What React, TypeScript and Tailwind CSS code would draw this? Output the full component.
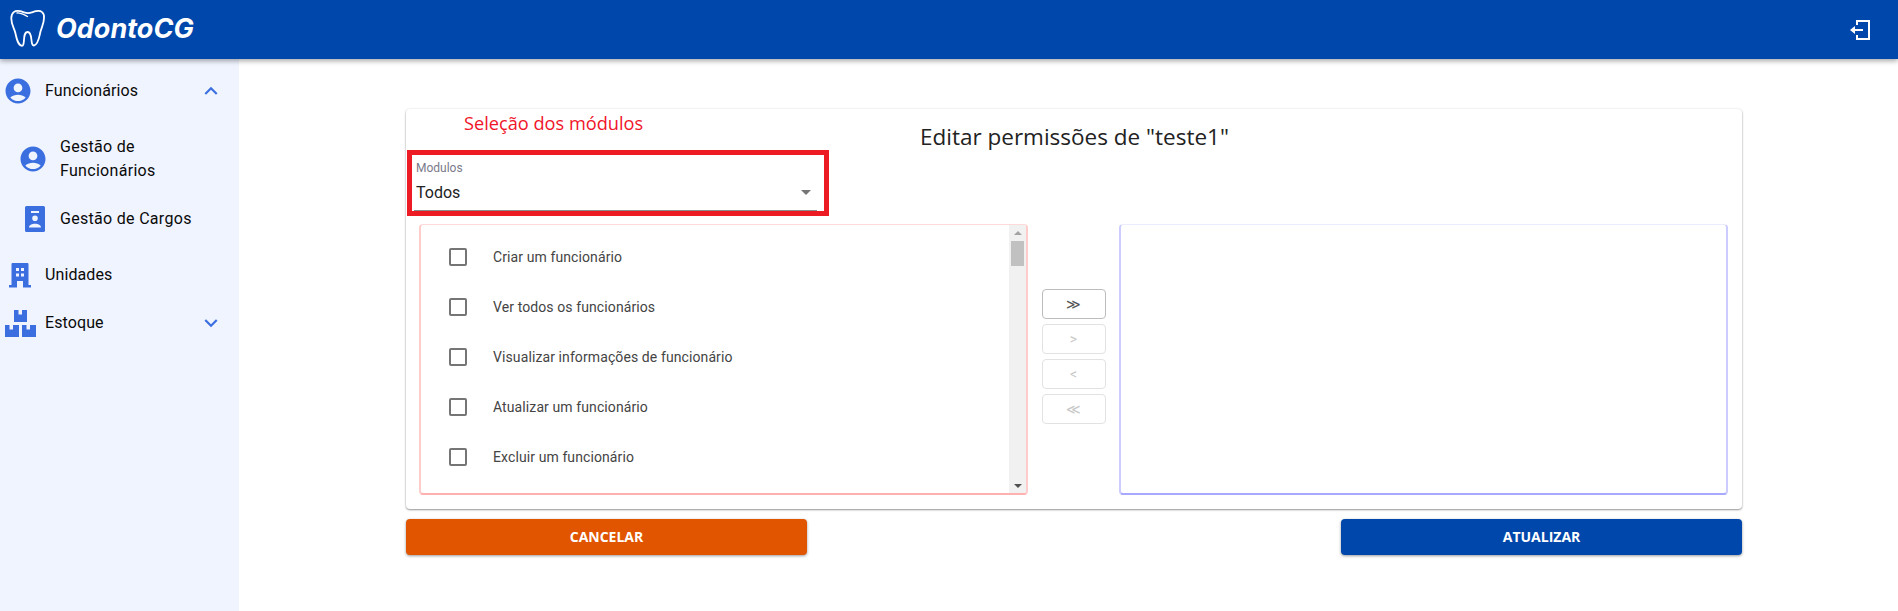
import React from "react";

const Blue = "#3b6fe0";
const AccountIcon = ({ s = 30 }: { s?: number }) => (
  <svg width={s} height={s} viewBox="0 0 24 24" fill={Blue}><path d="M12 2C6.48 2 2 6.48 2 12s4.48 10 10 10 10-4.48 10-10S17.52 2 12 2zm0 4c1.93 0 3.5 1.57 3.5 3.5S13.93 13 12 13s-3.5-1.57-3.5-3.5S10.07 6 12 6zm0 14c-2.03 0-4.43-.82-6.14-2.88C7.55 15.8 9.68 15 12 15s4.45.8 6.14 2.12C16.43 19.18 14.03 20 12 20z" /></svg>
);
const BadgeIcon = () => (
  <svg width="20" height="26" viewBox="0 0 20 26" fill={Blue}>
    <path fillRule="evenodd" d="M1.500 0h17A1.500 1.500 0 0 1 20 1.500v23a1.500 1.500 0 0 1-1.500 1.500h-17A1.500 1.500 0 0 1 0 24.500v-23A1.500 1.500 0 0 1 1.500 0zM6 5v2h8V5H6zm4 4.500a2.800 2.800 0 1 0 0 5.600 2.800 2.800 0 0 0 0-5.600zM4 21.500h12c0-2.600-3-3.800-6-3.800s-6 1.200-6 3.800z" />
  </svg>
);
const BuildingIcon = () => (
  <svg width="22" height="25" viewBox="0 0 22 25" fill={Blue}>
    <path fillRule="evenodd" d="M3.500 0h15a1 1 0 0 1 1 1v21H22v2.500h-8V18H8v6.500H0V22h2.500V1a1 1 0 0 1 1-1zM7 5v3h3V5H7zm5 0v3h3V5h-3zM7 10.500v3h3v-3H7zm5 0v3h3v-3h-3z" />
  </svg>
);
const BoxesIcon = () => (
  <svg width="31" height="27" viewBox="0 0 31 27" fill={Blue}>
    <path fillRule="evenodd" d="M9 0h4.500v4.500h3.500V0H22v12H9V0zM0 15h4.500v4.500H8V15h6v12H0V15zm17 0h4.500v4.500H25V15h6v12H17V15z" />
  </svg>
);
const Chevron = ({ up }: { up?: boolean }) => (
  <svg width="26" height="26" viewBox="0 0 24 24" fill={Blue}>
    <path d={up ? "M7.41 15.41 12 10.83l4.59 4.58L18 14l-6-6-6 6z" : "M7.41 8.59 12 13.17l4.59-4.58L18 10l-6 6-6-6z"} />
  </svg>
);
const Tooth = () => (
  <svg width="36" height="38" viewBox="0 0 36 38" fill="none" stroke="#fff" strokeWidth="2" strokeLinejoin="round" strokeLinecap="round">
    <path d="M10 2.200C5 1 1.300 3.500 1.300 9.500c0 5.500 2.500 9 3.800 13.500 1.300 5 2.200 13 6.900 13.800 1.500.2 1.800-3 2-6 .3-4 .4-7.500 3.500-7.800 3-.2 3.500 3.500 3.900 7.500.3 3 .7 6.300 2.500 6 4.500-.8 5.400-9 6.600-14 1.200-4.500 3.500-8 3.500-13.500C34.500 3.500 31 1 26 2.200c-3 .7-5.500 2-8 2-2.500 0-5-1.300-8-2z" strokeWidth="1.800" />
    <path d="M7 4c3.500-.4 6.500 1.500 10.500 3.500" strokeWidth="1.300" />
  </svg>
);

const NavRow = ({ icon, label, chev, className, track, iconPad }: { icon: React.ReactNode; label: string; chev?: React.ReactNode; className: string; track?: string; iconPad?: string }) => (
  <div className={`flex items-center ${className}`}>
    <div className={`w-[45px] shrink-0 flex justify-center ${iconPad ?? "pr-[5px]"}`}>{icon}</div>
    <span className={`flex-1 text-[16px] leading-[24px] text-[#0a0a0a] ${track ?? "tracking-[0.1px]"}`}>{label}</span>
    {chev && <div className="mr-[15px] flex">{chev}</div>}
  </div>
);

const perms = [
  "Criar um funcionário",
  "Ver todos os funcionários",
  "Visualizar informações de funcionário",
  "Atualizar um funcionário",
  "Excluir um funcionário",
];

const MoveBtn = ({ t, active }: { t: string; active?: boolean }) => (
  <div className={`h-[30px] w-[64px] flex items-center justify-center rounded-[4px] border text-[14px] leading-none ${active ? "border-[#bdbdbd] text-[#555]" : "border-[#e2e2e2] text-[#c8c8c8]"}`}>{t}</div>
);

export default function App() {
  return (
    <div className="w-full h-[611px] overflow-hidden flex flex-col bg-white" style={{ fontFamily: "Roboto, sans-serif" }}>
      <header className="relative z-10 h-[59px] shrink-0 bg-[#0047ab] flex items-center justify-between pl-[10px] pr-[27px] shadow-[0_2px_5px_rgba(0,0,0,0.35)]">
        <div className="flex items-center gap-[10px] mt-[-3px]">
          <Tooth />
          <span className="text-white italic font-bold text-[27px] leading-none" style={{ fontFamily: "Inter, sans-serif" }}>OdontoCG</span>
        </div>
        <svg width="22" height="22" viewBox="0 0 22 22" fill="none" stroke="#fff" strokeWidth="2">
          <path d="M8 6V2h12v18H8v-4" />
          <path d="M14 11H5" />
          <path d="M6 7 1 11l5 4z" fill="#fff" stroke="none" />
        </svg>
      </header>
      <div className="flex-1 flex min-h-0">
        <aside className="w-[239px] shrink-0 bg-[#f0f4ff] pt-[14px]">
          <NavRow className="h-[36px]" iconPad="pr-[10px]" icon={<AccountIcon />} label="Funcionários" chev={<Chevron up />} />
          <div className="pl-[15px] mt-[20px] pr-[40px]">
            <NavRow className="h-[60px]" iconPad="pr-[10px]" icon={<AccountIcon />} label="Gestão de Funcionários" track="tracking-[0.3px]" />
            <NavRow className="h-[60px]" icon={<BadgeIcon />} label="Gestão de Cargos" track="tracking-[0.3px]" />
          </div>
          <NavRow className="h-[48px] mt-[2px]" icon={<BuildingIcon />} label="Unidades" />
          <NavRow className="h-[48px]" icon={<BoxesIcon />} label="Estoque" chev={<Chevron />} />
        </aside>
        <main className="flex-1 pl-[167px] pr-[156px] pt-[50px]">
          <section className="h-[400px] rounded-[4px] bg-white shadow-[0_1px_2px_rgba(0,0,0,0.4),0_0_3px_rgba(0,0,0,0.08)]">
            <div className="flex h-[115px]">
              <div className="w-[423px] pl-[1px] shrink-0">
                <div className="h-[41px] pl-[57px] pt-[2px] text-[18.2px] leading-[24px] text-[#f0142a]" style={{ fontFamily: "'Open Sans', sans-serif" }}>Seleção dos módulos</div>
                <div className="h-[66px] border-[5px] border-[#ed1c24] pl-[2px] pr-[7px]">
                  <div className="h-[56px] border-b border-[#8a8a8a] flex flex-col pl-[2px]">
                    <div className="text-[12px] leading-[14px] text-[#7a7a8a] pt-[6px] h-[20px]">Modulos</div>
                    <div className="flex-1 flex items-center justify-between text-[16px] text-[#222] pr-[6px]">
                      <span>Todos</span>
                      <span className="w-0 h-0 border-l-[5px] border-r-[5px] border-t-[5px] border-l-transparent border-r-transparent border-t-[#757575]" />
                    </div>
                  </div>
                </div>
              </div>
              <h1 className="ml-[91px] pt-[10px] text-[22.5px] leading-[36px] font-normal text-[#222] whitespace-nowrap" style={{ fontFamily: "'Open Sans', sans-serif" }}>Editar permissões de "teste1"</h1>
            </div>
            <div className="flex pl-[13px] pr-[14px]">
              <div className="w-[609px] h-[271px] rounded-[4px] border border-[#ffdada] border-r-2 border-l-2 border-r-[#ffcccc] border-l-[#ffcccc] border-b-2 border-b-[#ffb0b0] flex overflow-hidden">
                <ul className="flex-1 pt-[7px]">
                  {perms.map((p) => (
                    <li key={p} className="h-[50px] flex items-center pl-[28px]">
                      <span className="w-[18px] h-[18px] rounded-[2px] border-2 border-[#757575] shrink-0" />
                      <span className="ml-[26px] text-[14px] text-[#444] tracking-[0.1px]">{p}</span>
                    </li>
                  ))}
                </ul>
                <div className="w-[17px] bg-[#f1f1f1] flex flex-col items-center pt-[6px]">
                  <span className="w-0 h-0 border-l-[4px] border-r-[4px] border-b-[4px] border-l-transparent border-r-transparent border-b-[#a3a3a3]" />
                  <span className="w-[13px] h-[25px] bg-[#c1c1c1] mt-[6px]" />
                  <span className="flex-1" />
                  <span className="w-0 h-0 mb-[5px] border-l-[4px] border-r-[4px] border-t-[4px] border-l-transparent border-r-transparent border-t-[#505050]" />
                </div>
              </div>
              <div className="w-[91px] pt-[65px] flex flex-col items-center gap-[5px]">
                <MoveBtn t="≫" active />
                <MoveBtn t=">" />
                <MoveBtn t="<" />
                <MoveBtn t="≪" />
              </div>
              <div className="flex-1 h-[271px] rounded-[4px] border border-[#ececff] border-l-2 border-r-2 border-l-[#ccccff] border-r-[#ccccff] border-b-2 border-b-[#a8a8ff]" />
            </div>
          </section>
          <div className="flex justify-between mt-[10px]" style={{ fontFamily: "'Open Sans', sans-serif" }}>
            <div className="w-[401px] h-[36px] rounded-[4px] bg-[#e25500] text-white text-[14px] font-bold flex items-center justify-center pb-[2px] shadow-[0_1px_3px_rgba(0,0,0,0.4)]">CANCELAR</div>
            <div className="w-[401px] h-[36px] rounded-[4px] bg-[#0047ab] text-white text-[14px] font-bold flex items-center justify-center pb-[2px] shadow-[0_1px_3px_rgba(0,0,0,0.4)]">ATUALIZAR</div>
          </div>
        </main>
      </div>
    </div>
  );
}
